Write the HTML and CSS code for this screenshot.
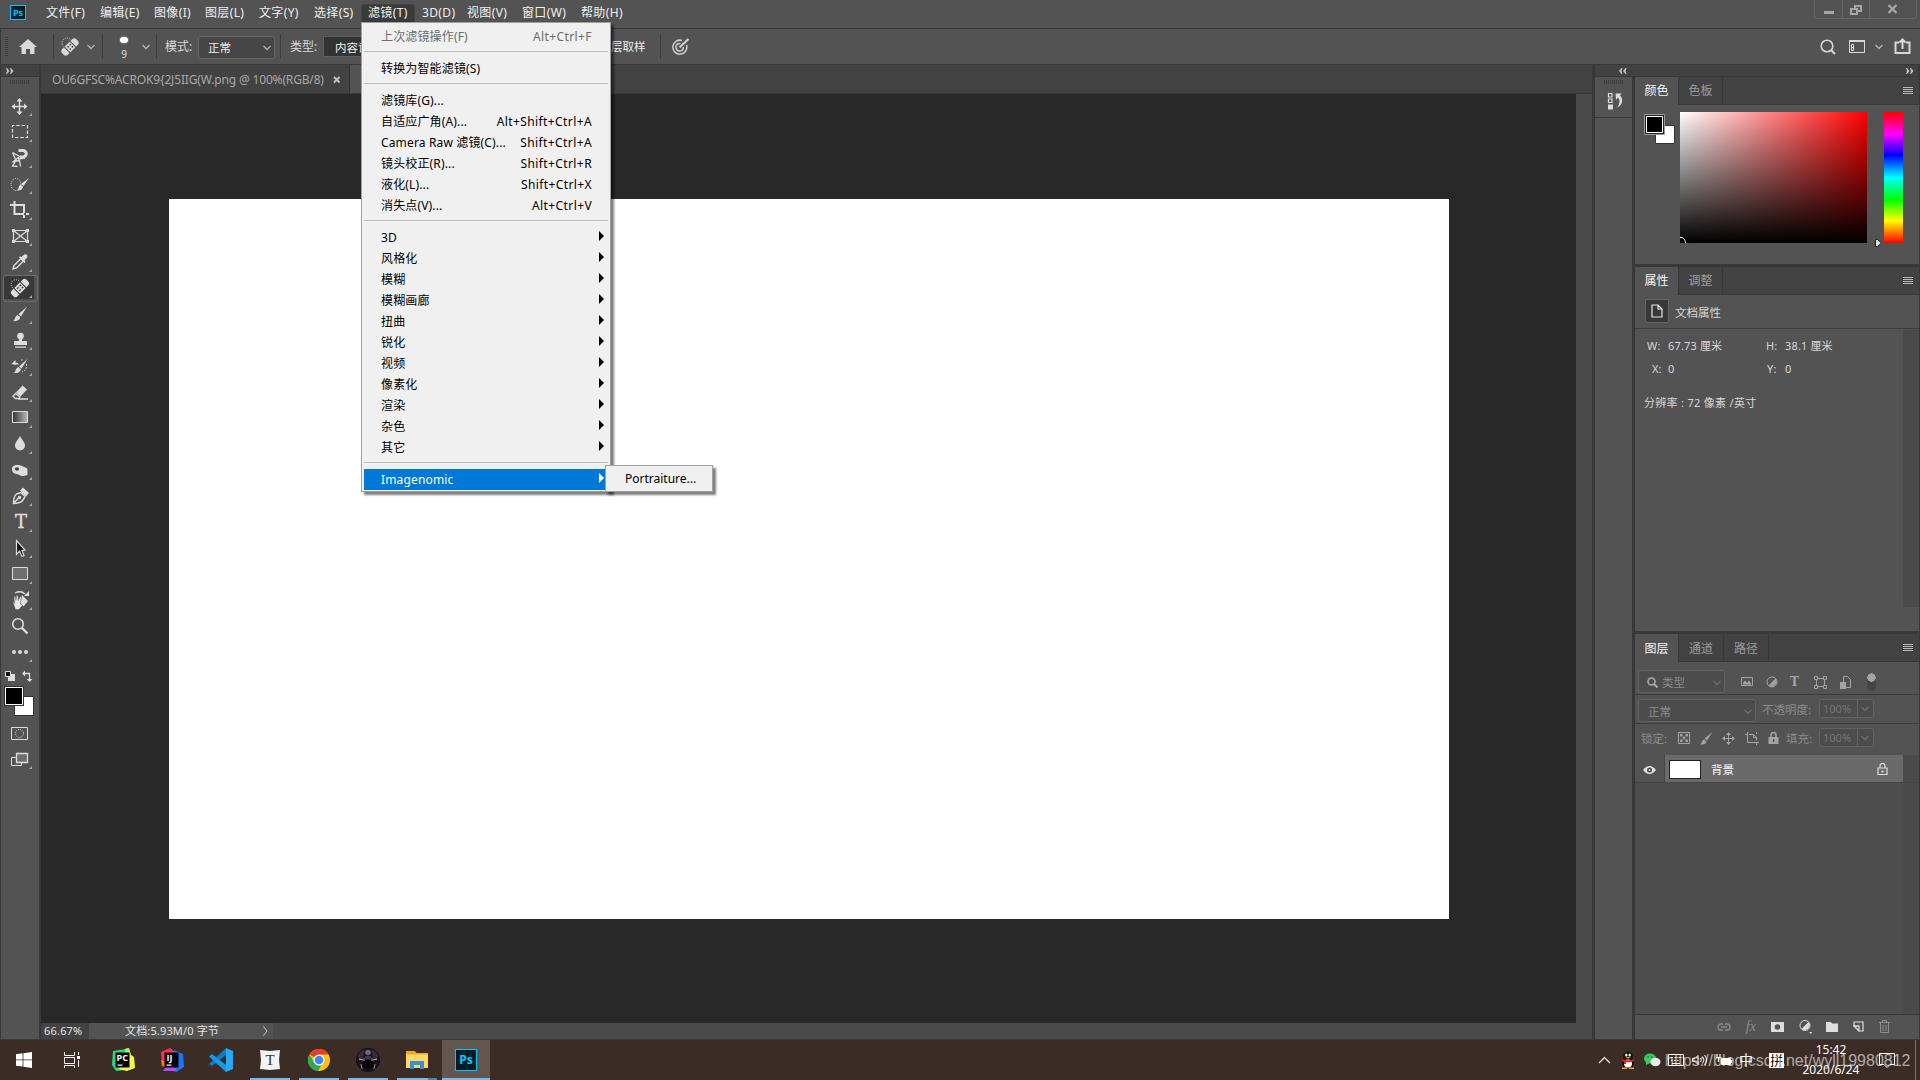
FILE: index.html
```html
<!DOCTYPE html>
<html lang="zh-CN">
<head>
<meta charset="utf-8">
<title>Photoshop</title>
<link rel="stylesheet" href="styles.css">
</head>
<body>
<div id="screen">

	<!-- 菜单栏 -->
	<div id="menubar">
		<span class="ps_logo">Ps</span>
		<ul class="menus">
			<li>文件(F)</li>
			<li>编辑(E)</li>
			<li>图像(I)</li>
			<li>图层(L)</li>
			<li>文字(Y)</li>
			<li>选择(S)</li>
			<li class="on">滤镜(T)</li>
			<li>3D(D)</li>
			<li>视图(V)</li>
			<li>窗口(W)</li>
			<li>帮助(H)</li>
		</ul>
		<div class="win_btns">
			<span class="min"><svg width="12" height="18"><path d="M1 11h10v3H1z" fill="#a6a6a6"/></svg></span>
			<span class="max"><svg width="14" height="18" fill="none" stroke="#a6a6a6" stroke-width="2"><path d="M6 8V6h6v5H9M2 9h6v5H2z"/></svg></span>
			<span class="cls"><svg width="12" height="18" stroke="#a6a6a6" stroke-width="2.4"><path d="M1.5 5l8 8M9.500 5l-8 8"/></svg></span>
		</div>
	</div>

	<!-- 选项栏 -->
	<div id="options">
		<i class="grip_v"></i>
		<span class="home"><svg width="18" height="16" fill="#d8d8d8"><path d="M9 0L0 8h2.500v7H7v-5h4v5h4.500V8H18z"/></svg></span>
		<i class="line"></i>
		<span class="opt_tool">
			<svg width="20" height="20"><circle cx="6" cy="6" r="5" fill="none" stroke="#ddd" stroke-dasharray="1 1.300"/><g transform="rotate(-45 9 10)"><rect x="-1" y="6" width="20" height="8" rx="3" fill="#d8d8d8"/><path d="M5 5v10M13 5v10" stroke="#535353"/><path d="M7 8.500h1.500M10 8.500h1.500M7 11.500h1.500M10 11.500h1.500" stroke="#444" stroke-width="1.500"/></g></svg>
			<svg class="chev" width="8" height="6"><path d="M.5 1L4 4.500 7.500 1"/></svg>
		</span>
		<i class="line"></i>
		<span class="opt_brush"><b></b><em>9</em></span>
		<svg class="chev" width="8" height="6"><path d="M.5 1L4 4.500 7.500 1"/></svg>
		<i class="line l3"></i>
		<label class="lb1">模式:</label>
		<span class="select">正常<svg class="chev" width="8" height="6"><path d="M.5 1L4 4.500 7.500 1"/></svg></span>
		<i class="line l4"></i>
		<label class="lb2">类型:</label>
		<span class="seg">内容识别</span>
		<span class="sample">层取样</span>
		<i class="line l5"></i>
		<svg class="target" width="18" height="17" fill="none" stroke="#cfcfcf" stroke-width="1.500"><path d="M14.500 7a7 7 0 1 1-4.500-4.500"/><path d="M11.500 9a3.800 3.800 0 1 1-3-3.500"/><path d="M7.500 9.500L16.500 1" stroke-width="2.200"/></svg>
		<div class="opt_right">
			<svg width="16" height="16" fill="none" stroke="#d8d8d8" stroke-width="1.600"><circle cx="7" cy="7" r="5.800"/><path d="M11 11l4 4" stroke-width="2"/></svg>
			<svg class="ws" width="16" height="14" fill="none" stroke="#d8d8d8"><path d="M.5 1v11.500h15V1z"/><path d="M0 1h16" stroke-width="2"/><path d="M2.500 4.500h2v6h-2zM2.500 7.500h2"/></svg>
			<svg class="chev" width="8" height="6"><path d="M.5 1L4 4.500 7.500 1"/></svg>
			<svg class="share" width="17" height="17" fill="none" stroke="#d8d8d8" stroke-width="2"><path d="M5 4.500H1.500V15h14V4.500H12M8.500 11V2M5.500 4.500l3-3 3 3"/></svg>
		</div>
	</div>

	<div id="workspace">
		<!-- 工具栏 -->
		<div id="tools">
			<div class="dock_head"><svg width="8" height="6" fill="#c4c4c4"><path d="M0 0h1l2.500 3L1 6H0l1-3zM4 0h1l2.500 3L5 6H4l1-3z"/></svg></div>
			<div class="grip_h"></div>
			<ul>
				<li><svg viewBox="0 0 38 26"><path d="M19.500 7v13M13 13.500h13" stroke="#ddd" stroke-width="1.400"/><path d="M19.500 5l3 3.500h-6zM19.500 22l3-3.500h-6zM11.500 13.500l3.500-3v6zM27.500 13.500l-3.500-3v6z" fill="#ddd"/></svg></li>
				<li><svg viewBox="0 0 38 26"><path d="M12.500 6.500h15v12h-15z" fill="none" stroke="#ddd" stroke-width="1.200" stroke-dasharray="3.500 1.900" stroke-dashoffset="1.700"/></svg></li>
				<li><svg viewBox="0 0 38 26" fill="none" stroke="#ddd" stroke-width="1.300"><path d="M12.500 7.500l7 4-6 5 6-1 1 6M12.500 7.500l3.500 8-3.500 5.500 5 .5M18 14l7-1"/><path d="M18.500 5.500h4.500a3 3 0 0 1 0 6.500h-3" stroke-width="3"/></svg></li>
				<li><svg viewBox="0 0 38 26"><ellipse cx="16" cy="13.500" rx="5" ry="6" fill="none" stroke="#ddd" stroke-dasharray="1 1.200"/><path d="M29 7l-5.500 8-2.500-2zM20.500 13.500l2.500 2.300c-.5 3-2.500 3.700-6 3.700 2-1.500 1-4 3.500-6z" fill="#ddd"/></svg></li>
				<li><svg viewBox="0 0 38 26" fill="none" stroke="#ddd" stroke-width="2"><path d="M10 8h14v8M14.500 4v13H24M26 17h3M24 18v3"/></svg></li>
				<li><svg viewBox="0 0 38 26" fill="none" stroke="#ddd" stroke-width="1.200"><path d="M13.500 7.500h14v11h-14zM13.500 7.500l14 11M27.500 7.500l-14 11"/><path d="M12 6h3v3h-3zM26 6h3v3h-3zM12 17h3v3h-3zM26 17h3v3h-3z" fill="#ddd" stroke="none"/></svg></li>
				<li><svg viewBox="0 0 38 26"><path d="M13 20l1-3.500 7-7 2.500 2.500-7 7z" fill="none" stroke="#ddd" stroke-width="1.400"/><path d="M19 8.500l5.500 5.500 1.200-1.200-1.200-1.500 2.500-2.500c1.500-2-1-4.500-3-3L21.500 8l-1.300-.7z" fill="#ddd"/></svg></li>
				<li class="on"><svg viewBox="0 0 38 26"><circle cx="16" cy="9.500" r="4.800" fill="none" stroke="#ddd" stroke-dasharray="1 1.200"/><g transform="rotate(-45 20 13)"><rect x="9.500" y="9" width="21" height="8" rx="2.500" fill="#ddd"/><path d="M15.500 8v10M24.500 8v10" stroke="#3a3a3a"/><path d="M17.500 11.500h2M21 11.500h2M17.500 14.500h2M21 14.500h2" stroke="#3a3a3a" stroke-width="1.400"/></g></svg></li>
				<li><svg viewBox="0 0 38 26"><path d="M27 5.500l-6 10-2.500-2.200zM17.500 14l2.800 2.300c-.8 3-3 3.900-7.300 3.900 2.500-1.500 1.500-4.700 4.500-6.200z" fill="#ddd"/></svg></li>
				<li><svg viewBox="0 0 38 26" fill="#ddd"><circle cx="20.500" cy="9" r="3.300"/><path d="M19 11h3v3h4q1 0 1 1v3H14v-3q0-1 1-1h4zM15 19.500h11v1.200H15z"/></svg></li>
				<li><svg viewBox="0 0 38 26"><path d="M27.500 6l-6 9.500-2.500-2zM18.500 14l2.500 2.200c-.8 3-3 3.900-7.300 3.900 2.500-1.500 1.500-4.700 4.800-6.100zM11.500 11l4-4v2.500q3 0 3.500 2h-3.500v.5z" fill="#ddd"/><path d="M21 7h2M26.500 11c.5 4-1 7-4.500 8" fill="none" stroke="#ddd" stroke-dasharray="1.500 1.500"/></svg></li>
				<li><svg viewBox="0 0 38 26"><path d="M22.500 6.500l4.500 4-6.500 7-4.500-4z" fill="#ddd"/><path d="M15.500 14.500l-2.500 2.800 2.500 2.200h3l1.500-1.500zM18 20h10" fill="none" stroke="#ddd" stroke-width="1.300"/></svg></li>
				<li><svg viewBox="0 0 38 26"><defs><linearGradient id="g1"><stop offset="0" stop-color="#333"/><stop offset="1" stop-color="#bbb"/></linearGradient></defs><path d="M12.500 6.500h15v11h-15z" fill="url(#g1)" stroke="#ddd"/></svg></li>
				<li><svg viewBox="0 0 38 26"><path d="M20 5c1.500 3.500 5 6 5 9.500a5 5 0 0 1-10 0C15 11 18.500 8.500 20 5z" fill="#ddd"/></svg></li>
				<li><svg viewBox="0 0 38 26"><path d="M12 12c0-3 2.500-4 5-4 3 0 4 .5 6 1.500 3 1 4.500 1.500 4.500 3.500v5l-4 1c-4 0-4-1.500-7-2-3-.5-4.500-2-4.500-5z" fill="#ddd"/><ellipse cx="17" cy="12" rx="2.200" ry="1.800" fill="#444"/></svg></li>
				<li><svg viewBox="0 0 38 26" fill="none" stroke="#ddd" stroke-width="1.400"><path d="M13.500 20.500c0-5 1-8 3-9.500l4.500-1.500 4 4-2 3.500c-2 2.500-5 3.500-9.500 3.500zM13.500 20.500l5-5.500"/><path d="M21 7.500l2-2 5 4.500-2 2.500z" fill="#ddd"/><circle cx="19.500" cy="14.500" r="1" fill="#ddd"/></svg></li>
				<li class="type"><span>T</span></li>
				<li><svg viewBox="0 0 38 26"><path d="M16.500 5.500v14l3-3.500 2.500 5.500 2-1-2-5 3-.5z" fill="#111" stroke="#ddd" stroke-width="1.200"/></svg></li>
				<li><svg viewBox="0 0 38 26"><path d="M12.500 6.500h15v12h-15z" fill="#6e6e6e" stroke="#ddd"/></svg></li>
				<li><svg viewBox="0 0 38 26"><path d="M22 8l6 6-4.500 5.500-3-3z" fill="#ddd"/><path d="M15 6q6-3 10 1" fill="none" stroke="#ddd" stroke-width="1.300"/><path d="M29 4v5h-5z" fill="#ddd"/><path d="M12.500 14l2 2.500-.5-6.500 1.500-.5.5 4 .5-5h1.500l.5 5 1.500-4 1.300.5-.8 7 2 1-2 3-2 1.500h-3z" fill="#e8e8e8" stroke="#535353" stroke-width=".4"/></svg></li>
				<li class="no_sub"><svg viewBox="0 0 38 26"><circle cx="18" cy="11" r="5.300" fill="none" stroke="#ddd" stroke-width="1.600"/><path d="M22 15l5.500 5.500" stroke="#ddd" stroke-width="2.400"/></svg></li>
				<li><svg viewBox="0 0 38 26" fill="#ddd"><circle cx="14" cy="13" r="2"/><circle cx="20" cy="13" r="2"/><circle cx="26" cy="13" r="2"/></svg></li>
			</ul>
			<svg class="swatch" width="38" height="52">
				<path d="M8 9h7v7H8z" fill="#ddd"/><path d="M5.500 6.500h5v5h-5z" fill="#111" stroke="#ddd"/>
				<path d="M24 8.500h5.500v6" fill="none" stroke="#ddd" stroke-width="1.300"/><path d="M22 8.500l3-3v6zM29.500 17l-3-3h6z" fill="#ddd"/>
				<path d="M14.500 31.500h19v19h-19z" fill="#fff" stroke="#333"/>
				<path d="M4 21h20v20H4z" fill="#333"/><path d="M5.500 22.500h17v17h-17z" fill="#000" stroke="#fff"/>
			</svg>
			<ul>
				<li class="no_sub"><svg viewBox="0 0 38 26" fill="none" stroke="#ddd"><path d="M11.500 7.500h16v12h-16z"/><circle cx="19.500" cy="13.500" r="4" stroke-dasharray="1 1.100"/></svg></li>
				<li><svg viewBox="0 0 38 26" fill="none" stroke="#ddd"><path d="M16 11.500h-4.500v8h10v-3"/><path d="M16.500 7.500h11v9h-11z" fill="#6e6e6e" stroke-width="1.300"/></svg></li>
			</ul>
		</div>

		<!-- 文档窗口 -->
		<div id="doc">
			<div class="tabs"><div class="tab">OU6GFSC%ACROK9{2J5IIG(W.png @ 100%(RGB/8)<svg width="8" height="8" stroke="#c2c2c2" stroke-width="2"><path d="M1 1l5.500 5.500M6.500 1L1 6.500"/></svg></div><div class="tab2"></div></div>
			<div class="stage">
				<div class="view"><div class="canvas"></div></div>
				<div class="vscroll"></div>
			</div>
			<div class="status"><span class="zoom">66.67%</span><span class="info">文档:5.93M/0 字节<svg width="5" height="10" fill="none" stroke="#ccc"><path d="M.5.500l3.500 4.500L.5 9.500"/></svg></span></div>
		</div>

		<!-- 折叠面板 -->
		<div id="icon_dock">
			<div class="dock_head"><svg width="8" height="6" fill="#c4c4c4"><path d="M7.500 0h-1L4 3l2.500 3h1l-1-3zM3.500 0h-1L0 3l2.500 3h1l-1-3z"/></svg></div>
			<div class="history"><div class="grip_h"></div>
				<svg width="16" height="18"><path d="M1.500 1.500h3.500v3.500H1.500zM1.500 7h3.500v3.500H1.500z" fill="none" stroke="#ddd" stroke-width="1.200"/><path d="M1 12.500h5v5H1z" fill="#ddd"/><path d="M8.500 1.500h6l-1.500 2q2.500 2 2 6-.5 4-5 6 2.500-3 2.500-6t-1.500-4L9 8z" fill="#ddd"/></svg>
			</div>
		</div>

		<!-- 右侧面板 -->
		<div id="panels">
			<div class="dock_head"><svg width="8" height="6" fill="#c4c4c4"><path d="M0 0h1l2.500 3L1 6H0l1-3zM4 0h1l2.500 3L5 6H4l1-3z"/></svg></div>

			<div class="panel color">
				<div class="ptabs"><span class="on">颜色</span><span>色板</span><i class="burger"></i></div>
				<div class="pbody">
					<svg class="fgbg" width="34" height="32"><path d="M12.500 12.500h19v18h-19z" fill="#fff" stroke="#333"/><path d="M1.500 1.500h20v20h-20z" fill="#222" stroke="#999"/><path d="M3.500 3.500h16v16h-16z" fill="#000" stroke="#fff"/></svg>
					<div class="field"><svg width="7" height="7" fill="none" stroke="#fff"><path d="M0 1.500c3-.5 5 1.500 5.500 5.500"/></svg></div>
					<svg class="knob" width="9" height="10"><path d="M1.500 1.500h2l4 3.500-4 3.500h-2z" fill="#ddd" stroke="#222"/></svg>
					<div class="hue"></div>
				</div>
			</div>

			<div class="panel props">
				<div class="ptabs"><span class="on">属性</span><span>调整</span><i class="burger"></i></div>
				<div class="ptitle"><span class="ico"><svg width="12" height="14" fill="none" stroke="#e4e4e4" stroke-width="1.200"><path d="M1 1h6l4 4v8H1zM7 1v4h4"/></svg></span><span class="tt">文档属性</span></div>
				<div class="pmain">
					<div class="grid">
						<span>W:</span><span>67.73 厘米</span><span>H:</span><span>38.1 厘米</span>
						<span class="xy">X:</span><span>0</span><span class="xy2">Y:</span><span>0</span>
					</div>
					<p>分辨率 : 72 像素 /英寸</p>
					<div class="pscroll"></div>
				</div>
			</div>

			<div class="panel layers">
				<div class="ptabs"><span class="on">图层</span><span>通道</span><span>路径</span><i class="burger"></i></div>
				<div class="row r1">
					<span class="sel kind"><svg width="11" height="11" fill="none" stroke="#aaa" stroke-width="1.600"><circle cx="4.500" cy="4.500" r="3.500"/><path d="M7 7l3.500 3.500" stroke-width="2"/></svg>类型<svg class="chev" width="8" height="6"><path d="M.5 1L4 4.500 7.500 1"/></svg></span>
					<div class="icons">
						<svg width="14" height="12"><path d="M1.500 1.500h11v8h-11z" fill="none" stroke="#a4a4a4"/><path d="M3 8.500V7l2-2.500L7 7l2-2.500 2 3v1z" fill="#a4a4a4"/></svg>
						<svg width="12" height="12"><circle cx="6" cy="6" r="5" fill="none" stroke="#a4a4a4"/><path d="M9.500 2.500a5 5 0 0 1-7 7z" fill="#a4a4a4"/></svg>
						<b>T</b>
						<svg width="13" height="13" fill="none" stroke="#a4a4a4"><path d="M3 2.500h7M3 10.500h7M2.500 3v7M10.500 3v7"/><path d="M.5.500h3v3h-3zM9.500.500h3v3h-3zM.5 9.500h3v3h-3zM9.500 9.500h3v3h-3z" fill="#535353"/></svg>
						<svg width="12" height="13"><path d="M4.500.500h4l3 3v8h-7z" fill="none" stroke="#a4a4a4"/><path d="M1 6h6v7H1z" fill="#a4a4a4"/></svg>
						<i class="toggle"></i>
					</div>
				</div>
				<div class="row r2">
					<span class="sel mode">正常<svg class="chev" width="8" height="6"><path d="M.5 1L4 4.500 7.500 1"/></svg></span>
					<label>不透明度:</label>
					<span class="num">100%<i><svg class="chev" width="8" height="6"><path d="M.5 1L4 4.500 7.500 1"/></svg></i></span>
				</div>
				<div class="row r3">
					<label class="lock">锁定:</label>
					<div class="locks">
						<svg width="12" height="12"><path d="M.5.500h11v11H.5z" fill="none" stroke="#a4a4a4"/><path d="M2 2h2.500v2.500H2zM7.500 2H10v2.500H7.500zM4.700 4.700h2.600v2.600H4.700zM2 7.500h2.500V10H2zM7.500 7.500H10V10H7.500z" fill="#a4a4a4"/></svg>
						<svg width="13" height="13"><path d="M12.500 0L7 8.500 4.500 6.500zM4 7.500l2.500 2c-.5 2.500-3 3-6.500 3C2 11.500 1.500 8.500 4 7.500z" fill="#a4a4a4"/></svg>
						<svg width="13" height="13"><path d="M6.500 2v9M2 6.500h9" stroke="#a4a4a4"/><path d="M6.500 0l2.500 3H4zM6.500 13l2.500-3H4zM0 6.500L3 4v5zM13 6.500L10 4v5z" fill="#a4a4a4"/></svg>
						<svg width="14" height="13" fill="none" stroke="#a4a4a4"><path d="M0 2.500h2M4 2.500h4.500l3 3v3M2.500 0v10.500M11.500 10v3M2.500 10.500H14M8.500 2.500v3h3M11.500 0v2"/></svg>
						<svg width="11" height="12"><path d="M3 5V3a2.500 2.500 0 0 1 5 0v2" fill="none" stroke="#a4a4a4" stroke-width="1.500"/><path d="M.5 5h10v7H.5z" fill="#a4a4a4"/><path d="M5 7h1.200v3H5z" fill="#444"/></svg>
					</div>
					<label class="fill">填充:</label>
					<span class="num">100%<i><svg class="chev" width="8" height="6"><path d="M.5 1L4 4.500 7.500 1"/></svg></i></span>
				</div>
				<div class="layer">
					<span class="eye"><svg width="13" height="10"><path d="M0 5Q6.500-3 13 5 6.500 13 0 5z" fill="#e2e2e2"/><circle cx="6.500" cy="5" r="2.500" fill="#444"/><circle cx="6.500" cy="5" r="1" fill="#ddd"/></svg></span>
					<div class="item"><i class="thumb"></i><span>背景</span><svg width="11" height="12"><path d="M3 5V3a2.500 2.500 0 0 1 5 0v2M1 5h9v6.500H1z" fill="none" stroke="#ddd" stroke-width="1.200"/><path d="M4.500 7.500h2v2h-2z" fill="#ddd"/></svg></div>
					<div class="lscroll"></div>
				</div>
				<div class="empty"><div class="lscroll"></div></div>
				<div class="pfoot">
					<svg width="14" height="8" fill="none" stroke="#8d8d8d" stroke-width="1.300"><path d="M6 1H4a3 3 0 0 0 0 6h2M8 1h2a3 3 0 0 1 0 6H8M4 4h6"/></svg>
					<em>fx</em>
					<svg width="13" height="10"><path d="M0 0h13v10H0z" fill="#ddd"/><circle cx="6.500" cy="5" r="2.800" fill="#535353"/></svg>
					<svg width="13" height="15"><circle cx="6" cy="6.500" r="5" fill="none" stroke="#ddd"/><path d="M9.500 3a5 5 0 0 1-7 7zM10 13h3.500L11.800 15z" fill="#ddd"/></svg>
					<svg width="12" height="11"><path d="M0 1h5l1 1.500h6V11H0z" fill="#ddd"/></svg>
					<svg width="11" height="11"><path d="M1 5V1h9v9H6.500" fill="none" stroke="#ddd" stroke-width="1.200"/><path d="M1 5h5v5z" fill="none" stroke="#ddd" stroke-width="1.300"/></svg>
					<svg width="11" height="13" fill="none" stroke="#8d8d8d"><path d="M0 2.500h11M3.500 2V.500h4V2M1.500 3v9.500h8V3M4 5v6M7 5v6"/></svg>
				</div>
			</div>
		</div>
	</div>

	<!-- 任务栏 -->
	<div id="taskbar">
		<ul class="apps">
			<li><svg width="16" height="16" fill="#fff"><path d="M0 2.300L6.600 1.300v6.200H0zM7.400 1.200L16 0v7.500H7.400zM0 8.300h6.600v6.300L0 13.700zM7.400 8.300H16V16l-8.600-1.200z"/></svg></li>
			<li class="view_btn"><svg width="17" height="16" fill="none" stroke="#fff"><path d="M.5 0v3.500h10V0M.5 5.500h10v6H.5zM.5 16v-2.500h10V16M14.500 0v3M14.500 8v7"/><path d="M13 4h3v3h-3z" fill="#fff" stroke="none"/></svg></li>
			<li><svg width="24" height="24"><path d="M2 3l13-2 2 4-4 17-8 1-4-6z" fill="#21d789"/><path d="M14 1l4-1 2 7 3 2 1 11-8 3-9-2 8-6z" fill="#fcf84a"/><path d="M14 1l4-1 1 6h-5z" fill="#a6ee65"/><path d="M4.500 4.500h14v15h-14z" fill="#000"/><path d="M6.500 16.500h5v1.200h-5z" fill="#fff"/><text x="5.500" y="12.500" class="jb">PC</text></svg></li>
			<li><svg width="24" height="24"><path d="M1 4l9-4 5 4-8 14-5-1z" fill="#fe315d"/><path d="M1 12l5 2 2 6-6-2z" fill="#f97a12"/><path d="M14 2l9 4 1 13-8 5-10-4 9-6z" fill="#1b76f5"/><path d="M5 20l-2 3h14l-4-6z" fill="#b74af7"/><path d="M4.500 4.500h14v15h-14z" fill="#000"/><path d="M6.500 16.500h5v1.200h-5z" fill="#fff"/><text x="6.500" y="12.500" class="jb">IJ</text></svg></li>
			<li><svg width="24" height="24"><path d="M17 0l7 3v18l-7 3z" fill="#2aa9f2"/><path d="M17 0v7L3 18l-3-2z" fill="#0b7cc8"/><path d="M17 24v-7L3 6 0 8.500z" fill="#159ae4"/></svg></li>
			<li class="run"><svg width="22" height="22"><path d="M1 1l10 1 10-1-1 10 1 9-10 1-10-1 1-9z" fill="#f3f3f3"/><text x="11" y="16" text-anchor="middle" font-family="Liberation Serif, serif" font-size="15" fill="#333">T</text></svg></li>
			<li class="run"><svg width="22" height="22"><circle cx="11" cy="11" r="11" fill="#fbc116"/><path d="M11 11L1.500 5.500A11 11 0 0 1 20.500 5.500H11z" fill="#e33b2e"/><path d="M1.500 5.500A11 11 0 0 0 10 22l4.800-8.500L6.500 14z" fill="#2da94f"/><circle cx="11" cy="11" r="5.500" fill="#fff"/><circle cx="11" cy="11" r="4.300" fill="#4285f4"/></svg></li>
			<li class="run"><svg width="24" height="24"><circle cx="12" cy="12" r="12" fill="#17131b"/><path d="M2 7q3-5 7-5l-2 8-4 3zM22 7q-3-5-7-5l2 8 4 3z" fill="#3a2a3a"/><circle cx="12" cy="4.500" r="2.800" fill="#6d668c"/><path d="M9 8h6l-1 5h-4z" fill="#3b3a5c"/><path d="M3 11l4 1M21 11l-4 1" stroke="#e59bd0"/><circle cx="12" cy="16.500" r="5" fill="#050505"/><path d="M5 16l1 5M19 16l-1 5M8 10v3M16 10v3" stroke="#9a8a80"/></svg></li>
			<li class="run multi"><svg width="22" height="20"><path d="M0 1h9l1.500 2H22v15H0z" fill="#e8ab1d"/><path d="M0 4.500h22V18H0z" fill="#ffd968"/><path d="M4 11h14v8h-4v-4H8v4H4z" fill="#3a8fd4"/></svg></li>
			<li class="run cur"><span class="ps_big">Ps</span></li>
		</ul>
		<div class="tray">
			<svg class="up" width="13" height="8" fill="none" stroke="#fff" stroke-width="1.200"><path d="M1 7l5.500-5.500L12 7"/></svg>
			<svg class="qq" width="16" height="18"><ellipse cx="8" cy="12" rx="6" ry="5.500" fill="#111"/><ellipse cx="8" cy="6" rx="4.800" ry="5.500" fill="#111"/><ellipse cx="8" cy="12.500" rx="4" ry="4" fill="#fff"/><ellipse cx="6.300" cy="4" rx="1.200" ry="1.600" fill="#fff"/><ellipse cx="9.700" cy="4" rx="1.200" ry="1.600" fill="#fff"/><path d="M5 6h6l-3 1.500zM2 16.500h5V18H2zM9 16.500h5V18H9z" fill="#f9a51a"/><path d="M2 8q6 2.500 12 0v2q-6 2-8 1v2H4v-2.500l-2-.5z" fill="#e2231a"/></svg>
			<svg class="wx" width="17" height="14"><ellipse cx="6" cy="5.500" rx="6" ry="5" fill="#34cc63"/><path d="M2 8v4l4-2z" fill="#34cc63"/><ellipse cx="11.500" cy="9" rx="5" ry="4.200" fill="#ececec"/><circle cx="4" cy="4" r=".8" fill="#15692f"/><circle cx="8" cy="4" r=".8" fill="#15692f"/></svg>
			<svg class="kb" width="17" height="12" fill="none" stroke="#fff"><path d="M.5.500h15v11H.5zM3 3.500h2M7 3.500h2M11 3.500h2M3 6.500h1.500M6 6.500h1.500M9 6.500h1.500M4 9.500h8"/></svg>
			<svg class="vol" width="15" height="12" fill="none" stroke="#fff"><path d="M.5 4.500H3L6 1.500v9L3 7.500H.5zM8.500 4q1.500 2 0 4M10.500 2.500q3 3.500 0 7M12.500 1q4 5 0 10"/></svg>
			<svg class="bat" width="16" height="12"><path d="M5.500 4.500h9v6h-9z" fill="#fff" stroke="#fff"/><path d="M15 6h1v3h-1z" fill="#fff"/><path d="M1 0v3M4 0v3M0 3.500h5.500M2.500 4v4" stroke="#fff" stroke-width="1.200"/></svg>
			<span class="zh">中</span>
			<span class="py">拼</span>
			<div class="clock">15:42<br>2020/6/24</div>
			<svg class="note" width="17" height="17" fill="none" stroke="#fff"><path d="M.5 1.500h15v11H11L8 15.500 5 12.500H.5z"/></svg>
		</div>
	</div>

	<!-- 滤镜菜单 -->
	<div class="dropdown">
		<ul>
			<li class="dis">上次滤镜操作(F)<span>Alt+Ctrl+F</span></li>
			<li class="sep"></li>
			<li>转换为智能滤镜(S)</li>
			<li class="sep"></li>
			<li>滤镜库(G)...</li>
			<li>自适应广角(A)...<span>Alt+Shift+Ctrl+A</span></li>
			<li>Camera Raw 滤镜(C)...<span>Shift+Ctrl+A</span></li>
			<li>镜头校正(R)...<span>Shift+Ctrl+R</span></li>
			<li>液化(L)...<span>Shift+Ctrl+X</span></li>
			<li>消失点(V)...<span>Alt+Ctrl+V</span></li>
			<li class="sep"></li>
			<li class="sub">3D</li>
			<li class="sub">风格化</li>
			<li class="sub">模糊</li>
			<li class="sub">模糊画廊</li>
			<li class="sub">扭曲</li>
			<li class="sub">锐化</li>
			<li class="sub">视频</li>
			<li class="sub">像素化</li>
			<li class="sub">渲染</li>
			<li class="sub">杂色</li>
			<li class="sub">其它</li>
			<li class="sep"></li>
			<li class="sub hover">Imagenomic</li>
		</ul>
	</div>
	<div class="dropdown submenu">Portraiture...</div>

	<div class="watermark">https://blog.csdn.net/wyll19980812</div>
</div>
</body>
</html>
```
FILE: styles.css
```css
/** 공통 **/
*{margin:0; padding:0; box-sizing:border-box;}
html, body{width:1920px; height:1080px; overflow:hidden; background:#282828;}
body{font:12px/16px "Noto Sans", "Noto Sans CJK SC", sans-serif; color:#d8d8d8;}
ul{list-style:none;}
i, em{font-style:normal;}
svg{display:block; flex:none;}
span, label{white-space:nowrap;}
.chev{fill:none; stroke:#b4b4b4; stroke-width:1.3;}

#screen{position:relative; display:flex; flex-direction:column; width:1920px; height:1080px; overflow:hidden;}

/* 菜单栏 */
#menubar{display:flex; height:28px; background:#535353;}
.ps_logo{width:16px; height:15px; margin:5px 0 0 10px; border:1px solid #00c8ff; background:#001d26; color:#00c8ff; font:bold 9px/13px "Open Sans", sans-serif; text-align:center;}
.menus{display:grid; grid-template-columns:54px 54px 51px 54px 55px 48px 52px 53px 55px 59px 60px; margin-left:20px; padding-top:5px; height:22px;}
.menus li{font-size:12px; line-height:16px; color:#f0f0f0; white-space:nowrap; letter-spacing:.35px;}
.menus li.on{padding-left:6px; background:#3a3a3a; border-radius:2px 2px 0 0; box-shadow:0 0 0 1px #444;}
.menus li.on + li{padding-left:8px;}
.win_btns{display:flex; margin-left:auto; margin-right:3px; width:103px; height:19px; border:1px solid #656565; border-top:0; border-radius:0 0 3px 3px;}
.win_btns span{display:flex; justify-content:center; border-right:1px solid #656565; width:28px;}
.win_btns .max{width:27px;}
.win_btns .cls{flex:1; border:0;}

/* 选项栏 */
#options{display:flex; align-items:center; height:36px; background:#535353; border-top:1px solid #383838; border-left:1px solid #383838;}
.grip_v{width:3px; height:20px; margin-left:4px; background:repeating-linear-gradient(#3f3f3f 0 1px, transparent 1px 2px);}
.home{margin-left:11px;}
.line{width:1px; height:25px; background:#3d3d3d; margin-left:16px;}
.opt_tool{display:flex; align-items:center; margin-left:7px; gap:6px;}
.opt_tool + .line{margin-left:7px;}
.opt_brush{display:flex; flex-direction:column; align-items:center; width:20px; margin:0 8px 0 11px; height:28px;}
.opt_brush b{width:8px; height:8px; margin-top:4px; border-radius:50%; background:#fff; box-shadow:0 0 2px #ddd;}
.opt_brush em{font-size:10px; line-height:14px; margin-top:4px; color:#e0e0e0;}
.l3{margin-left:6px;}
.lb1{width:33px; margin-left:8px;}
.select{display:flex; align-items:center; justify-content:space-between; width:77px; height:23px; padding:1px 3px 0 9px; border:1px solid #666; border-radius:3px; background:#464646; font-size:11.500px; color:#f0f0f0; margin-top:2px;}
.l4{margin-left:5px;}
.lb2{width:33px; margin-left:9px;}
.seg{width:108px; height:21px; padding:3px 0 0 11px; line-height:15px; border:1px solid #5e5e5e; background:#333; color:#f0f0f0; font-size:11.500px;}
.sample{margin:1px 0 0 180px; color:#f0f0f0; font-size:11.500px;}
.l5{margin-left:14px;}
.target{margin-left:11px;}
.opt_right{display:flex; align-items:center; margin-left:auto; margin-right:9px;}
.opt_right .ws{margin-left:13px;}
.opt_right .chev{margin-left:10px;}
.opt_right .share{margin-left:11px;}

/* 作业区 */
#workspace{display:flex; height:976px; background:#383838; border-top:1px solid #383838; padding-bottom:1px;}
.dock_head{height:12px; padding:3px 0 0 5px; background:#424242; border-bottom:1px solid #383838;}

/* 工具 */
#tools{width:38px; margin:0 2px 0 1px; background:#535353;}
.grip_h{width:19px; height:4px; background:repeating-linear-gradient(90deg, #3f3f3f 0 1px, transparent 1px 2px);}
#tools .grip_h{margin:3px 0 9px 9px;}
#tools li{position:relative; width:38px; height:26px; margin-left:-1px;}
#tools li svg{width:38px; height:26px;}
#tools li:after{content:""; position:absolute; left:29px; top:20px; border-left:3px solid transparent; border-bottom:3px solid #aaa;}
#tools li.no_sub:after{display:none;}
#tools li.on{background:linear-gradient(#383838,#383838) 4px 1px/30px 23px no-repeat; }
#tools li.on:before{content:""; position:absolute; left:3px; top:0; width:33px; height:25px; border:1px solid #6c6c6c; border-radius:3px;}
#tools li.type{font:18px/26px "DejaVu Serif", serif; color:#ddd; padding-left:15px; -webkit-text-stroke:.4px #ddd;}
.swatch{margin-left:-1px; height:55px;}

/* 文档 */
#doc{display:flex; flex-direction:column; width:1551px;}
#doc .tabs{display:flex; height:29px; background:#424242; border-bottom:1px solid #383838;}
#doc .tab{display:flex; align-items:center; width:309px; padding:2px 0 0 11px; color:#a8a8a8; font-size:12px; letter-spacing:-.16px; border-right:1px solid #333; white-space:nowrap;}
#doc .tab svg{margin-left:9px;}
#doc .tab2{width:150px; background:#535353;}
.stage{display:flex; height:929px;}
.view{width:1535px; background:#282828; padding:105px 0 0 128px;}
.canvas{width:1280px; height:720px; background:#fff;}
.vscroll{flex:1; background:#4a4a4a;}
.status{display:flex; height:16px; background:#4a4a4a; font-size:11px; line-height:16px; color:#e4e4e4;}
.status .zoom{width:48px; padding-left:3px; background:#424242; letter-spacing:.2px;}
.status .info{display:flex; align-items:center; justify-content:space-between; width:184px; padding:0 5px 0 36px; background:#535353; letter-spacing:.15px;}

/* 折叠面板 */
#icon_dock{width:37px; margin:0 0 0 3px; background:#535353;}
#icon_dock .dock_head{padding-left:24px;}
.history{height:41px; border-bottom:1px solid #383838; padding:3px 0 0 9px;}
.history svg{margin:8px 0 0 3px;}

/* 右侧面板 */
#panels{width:285px; margin-left:2px; background:#383838; display:flex; flex-direction:column;}
#panels .dock_head{padding-left:274px; margin-left:-2px; width:286px;}
.panel{background:#535353; margin-left:1px;}
.ptabs{display:flex; height:28px; background:#424242; border-bottom:1px solid #383838;}
.ptabs span{width:44px; text-align:center; font-size:12px; line-height:28px; color:#9c9c9c; border-right:1px solid #383838;}
.ptabs span.on{color:#f6f6f6; background:#535353; height:28px;}
.burger{width:10px; height:8px; margin:10px 6px 0 auto; background:repeating-linear-gradient(#b8b8b8 0 1px, transparent 1px 2px);}
.color{height:187px;}
.color .pbody{display:flex; align-items:flex-start; padding:7px 0 0 8px;}
.fgbg{margin:1px 0 0 0;}
.field{display:flex; align-items:flex-end; width:187px; height:131px; margin-left:3px; background:linear-gradient(to top, #000, transparent), linear-gradient(to right, #fff, #f00);}
.knob{margin:126px 0 0 7px;}
.hue{width:19px; height:131px; margin-left:1px; background:linear-gradient(#f00, #f0f 17%, #00f 33%, #0ff 50%, #0f0 67%, #ff0 83%, #f00);}
.props{height:365px; margin-top:3px;}
.ptitle{display:flex; align-items:center; height:34px; padding-left:10px; border-bottom:1px solid #3c3c3c; gap:6px; font-size:11.500px;}
.ptitle .ico{display:flex; align-items:center; justify-content:center; width:24px; height:24px; border:1px solid #656565; border-radius:2px; background:#383838;}
.ptitle .tt{padding-top:3px;}
.pmain{position:relative; padding:6px 0 0 12px; font-size:11px; letter-spacing:.15px;}
.grid{display:grid; grid-template-columns:21px 98px 19px 100px; grid-auto-rows:23px; line-height:22px;}
.grid .xy{padding-left:5px;}
.grid .xy2{padding-left:1px;}
.pmain p{margin:12px 0 0 -3px; line-height:20px; letter-spacing:.3px;}
.pscroll{position:absolute; right:0; top:1px; width:16px; height:277px; background:#4a4a4a;}

.layers{display:flex; flex-direction:column; height:405px; margin-top:3px;}
.layers .ptabs span + span{width:45px;}
.layers .ptabs span{line-height:30px;}
.row{display:flex; align-items:flex-start; border-bottom:1px solid #3c3c3c; color:#8c8c8c; font-size:11.500px;}
.r1{height:33px; padding:8px 0 0 3px;}
.r2{height:29px; padding:4px 0 0 3px;}
.r3{height:31px; padding:4px 0 0 6px; border:0;}
.sel{display:flex; align-items:center; height:23px; border:1px solid #636363; border-radius:3px; background:#4c4c4c; padding:2px 3px 0 0;}
.sel .chev, .num .chev{margin-left:auto; stroke:#6c6c6c;}
.kind{width:87px; padding-left:8px; gap:4px;}
.mode{width:118px; padding-left:9px;}
.icons{display:flex; align-items:center; margin:3px 0 0 15px; height:18px;}
.icons svg{margin-right:12px;}
.icons b{font:bold 12px/18px "DejaVu Serif", serif; color:#a4a4a4; width:11px; margin-right:13px;}
.toggle{width:9px; height:18px; margin-left:4px; border-radius:5px; background:radial-gradient(circle at 4.500px 4.500px, #a4a4a4 4px, #454545 4.500px);}
.row label{line-height:21px;}
.r2 label{margin-left:6px; width:57px;}
.num{display:flex; align-items:center; width:55px; height:19px; padding-left:3px; border:1px solid #636363; border-radius:3px; background:#4c4c4c; color:#767676; font-size:11px;}
.num i{display:flex; align-items:center; width:16px; height:17px; margin-left:auto; padding-right:4px; border-left:1px solid #636363;}
.r3 .lock{width:37px;}
.locks{display:flex; align-items:center; justify-content:space-between; width:101px; height:20px;}
.r3 .fill{margin-left:7px; width:33px;}
.layer{display:flex; height:28px; border-bottom:1px solid #454545;}
.eye{display:flex; align-items:center; justify-content:center; width:30px; padding-top:2px; border-right:1px solid #454545;}
.item{display:flex; align-items:center; width:238px; padding:1px 15px 0 4px; background:#6a6a6a; color:#fff; font-size:11.500px;}
.item span{padding-top:1px;}
.item svg{margin-left:auto;}
.thumb{width:32px; height:19px; margin-right:10px; background:#fff; border:1px solid #222;}
.lscroll{width:16px; background:#4a4a4a; margin-left:auto;}
.empty{flex:1; display:flex; background:#4d4d4d;}
.pfoot{display:flex; align-items:center; justify-content:space-between; height:25px; padding:0 29px 0 82px; border-top:1px solid #383838;}
.pfoot svg{margin-bottom:1px;}
.pfoot em{font:italic 14px/20px "Liberation Serif", serif; color:#8d8d8d;}

/* 任务栏 */
#taskbar{display:flex; height:40px; background:#3b2d26;}
.apps{display:flex; gap:1px;}
.apps li{display:flex; align-items:center; justify-content:center; width:48px; height:40px;}
.apps .view_btn{width:49px; padding-right:3px;}
.apps .run{background:linear-gradient(#76b9ed,#76b9ed) 50% 100%/40px 2px no-repeat;}
.apps .multi{background:linear-gradient(90deg, #76b9ed 31px, #4f83ad 31px) 50% 100%/40px 2px no-repeat;}
.apps .cur{background:linear-gradient(#76b9ed,#76b9ed) 0 100%/48px 2px no-repeat #62564f;}
.jb{font:bold 9px "Open Sans", sans-serif; fill:#fff;}
.ps_big{width:22px; height:22px; margin-top:-1px; border:1px solid #00c8ff; background:#001d26; color:#00c8ff; font:bold 12px/19px "Open Sans", sans-serif; text-align:center;}
.tray{display:flex; align-items:center; margin-left:auto; width:322px; padding-left:4px; border-right:1px solid #7c736e; margin-right:4px; color:#fff;}
.qq{margin-left:9px;}
.wx{margin-left:8px;}
.kb{margin-left:7px;}
.vol{margin-left:7px;}
.bat{margin-left:9px;}
.zh{margin-left:7px; font-size:14px; width:14px;}
.py{margin-left:16px; width:15px; height:15px; background:#fff; color:#000; font-size:13px; line-height:15px; text-align:center;}
.clock{width:70px; margin-left:12px; text-align:center; line-height:20px; font-size:12px;}
.note{margin-left:13px;}

/* 下拉菜单 */
.dropdown{position:absolute; left:361px; top:22px; width:250px; height:470px; padding:3px 2px 0 1px; border:1px solid #a0a0a0; background:#f0f0f0; color:#000; box-shadow:3px 3px 2px rgba(0,0,0,.5);}
.dropdown li{display:flex; align-items:center; justify-content:space-between; height:21px; margin-left:1px; padding:0 16px 0 17px; line-height:20px; white-space:nowrap; letter-spacing:.15px;}
.dropdown li span{letter-spacing:.4px;}
.dropdown .dis{color:#6d6d6d;}
.dropdown .sep{height:11px; padding:0;}
.dropdown .sep:after{content:""; flex:1; height:1px; margin:0 0 2px 0; background:#bdbdbd;}
.dropdown .sub{padding-right:4px;}
.dropdown .sub:after{content:""; margin-bottom:4px; border:5px solid transparent; border-left-color:#000; border-right:0;}
.dropdown .hover{background:#0078d7; color:#fff;}
.dropdown .hover:after{border-left-color:#fff;}
.submenu{left:605px; top:465px; width:108px; height:27px; padding:0 0 0 19px; line-height:25px;}

.watermark{position:absolute; left:1665px; top:1051px; font:16px/20px "Liberation Sans", sans-serif; color:rgba(255,255,255,.6); white-space:nowrap;}
```
